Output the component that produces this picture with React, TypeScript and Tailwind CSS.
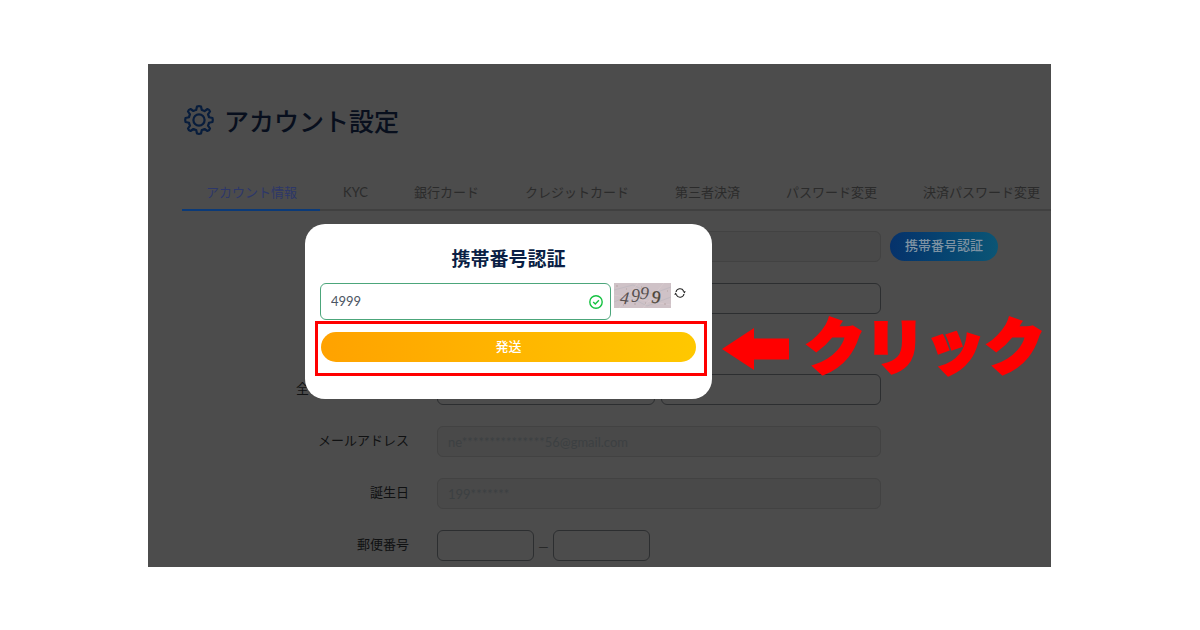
import type { ReactNode } from "react";

const TABS = [
  "アカウント情報",
  "KYC",
  "銀行カード",
  "クレジットカード",
  "第三者決済",
  "パスワード変更",
  "決済パスワード変更",
];

const INPUT = "h-[31px] min-w-0 rounded-md border px-2.5 text-[13px] outline-none";
const ENABLED = "border-[#2c2e30] bg-transparent";
const DISABLED = "border-[#424242] bg-[#494949] text-[#3c4042]";

function GearIcon() {
  return (
    <svg
      viewBox="0 0 32 32"
      className="size-8 shrink-0"
      fill="none"
      stroke="#081d3c"
      strokeWidth="2.2"
      strokeLinejoin="round"
      aria-hidden="true"
    >
      <path d="M14 2.5Q16 1.9 18 2.5L18.8 6Q20.4 6.4 21.6 7.1L24.5 5Q26.500 5.500 27 7.500L25 10.400Q25.700 11.600 26 13.200L29.500 14Q30.100 16 29.500 18L26 18.800Q25.700 20.400 25 21.600L27 24.500Q26.500 26.500 24.500 27L21.600 25Q20.400 25.700 18.800 26L18 29.500Q16 30.100 14 29.500L13.200 26Q11.600 25.700 10.400 25L7.500 27Q5.500 26.500 5 24.500L7 21.600Q6.300 20.400 6 18.800L2.500 18Q1.900 16 2.500 14L6 13.200Q6.300 11.600 7 10.400L5 7.500Q5.500 5.500 7.500 5L10.400 7Q11.600 6.300 13.200 6Z" />
      <circle cx="16" cy="16" r="5.6" />
    </svg>
  );
}

function Captcha() {
  return (
    <svg viewBox="0 0 57 25" className="h-[25px] w-[57px] shrink-0" role="img" aria-label="4999">
      <rect width="57" height="25" fill="#cfc2c7" />
      <g fill="none" strokeWidth="0.6">
        <path d="M0 7 19 2 38 11 57 4M0 19 14 13 33 23 57 14" stroke="#b9b6bd" />
        <path d="M5 25 24 0M29 25 50 0M0 12 28 17 57 22" stroke="#dccdd0" />
        <path d="M2 3h2M12 6h1M20 21h2M31 20h1M50 21h2M53 8h1M9 22h1M27 4h1" stroke="#a4918f" />
      </g>
      <g fill="#57504f" fontFamily="Liberation Serif, serif" fontSize="18">
        <text x="6" y="21" fontStyle="italic" transform="rotate(6 11 15)">4</text>
        <text x="17" y="19" fontStyle="italic">9</text>
        <text x="26" y="16" fontStyle="italic" transform="rotate(4 31 10)">9</text>
        <text x="38" y="20" fill="#4b4538" stroke="#4b4538" strokeWidth="0.3" transform="rotate(10 42 13)">9</text>
      </g>
    </svg>
  );
}

function RefreshIcon() {
  return (
    <svg viewBox="0 0 12 12" className="size-3" aria-hidden="true">
      <path d="M2 5a4.1 4.1 0 0 1 7.6-1.1M10 7a4.1 4.1 0 0 1-7.6 1.1" fill="none" stroke="#222" strokeWidth="1.1" />
      <path d="M8.6 4.2h3.1L10.6 6.6zM3.4 7.8H.3L1.4 5.4z" fill="#222" />
    </svg>
  );
}

function CheckIcon() {
  return (
    <svg viewBox="0 0 14 14" className="size-3.5 shrink-0" fill="none" stroke="#15c241" strokeWidth="1.4" aria-hidden="true">
      <circle cx="7" cy="7" r="6.2" />
      <path d="m4.2 7 2.1 2 3.6-3.7" />
    </svg>
  );
}

function Row({ label, id, children }: { label?: string; id?: string; children: ReactNode }) {
  return (
    <div className="flex items-center gap-7">
      <div className="flex w-[225px] shrink-0 justify-end pb-[3px] text-[13px] leading-5 text-[#101112]">
        {label && <label htmlFor={id}>{label}</label>}
      </div>
      <div className="flex items-center">{children}</div>
    </div>
  );
}

function VerifyDialog() {
  return (
    <div
      role="dialog"
      aria-labelledby="verify-title"
      className="w-[407px] shrink-0 rounded-[20px] bg-white px-[10px] pt-5 pb-[23px]"
    >
      <h2 id="verify-title" className="text-center text-[19px] leading-7 font-bold text-[#0b1f45]">
        携帯番号認証
      </h2>
      <div className="mt-[11px] flex items-start gap-[3px] pl-[5px]">
        <div className="flex h-[37px] w-[291px] items-center rounded-md border border-[#4ca67b] pr-[7px] pl-2.5">
          <input
            aria-label="認証コード"
            defaultValue="4999"
            className="min-w-0 flex-1 font-['Lato','Noto_Sans_CJK_JP',sans-serif] text-[13px] text-[#4b5563] outline-none"
          />
          <CheckIcon />
        </div>
        <Captcha />
        <button type="button" aria-label="更新" className="mt-1">
          <RefreshIcon />
        </button>
      </div>
      {/* Highlighted submit area */}
      <div className="mt-px -mr-[5px] border-3 border-[#f00] pt-2 pr-2 pb-[11px] pl-[3px]">
        <button
          type="button"
          className="block h-[30px] w-full rounded-full bg-linear-to-r from-[#ffa200] to-[#ffc800] pb-0.5 text-[13px] font-medium text-white"
        >
          発送
        </button>
      </div>
    </div>
  );
}

function ClickCallout() {
  return (
    <div className="mt-[89px] ml-2.5 flex shrink-0 items-start gap-4 text-[#f00]">
      <svg viewBox="0 0 67 42" className="mt-[15px] h-[42px] w-[67px] shrink-0" fill="currentColor" aria-hidden="true">
        <path d="M0 21 32 0v10.500h35v21H32V42z" />
      </svg>
      <span className="text-[60px] leading-[60px] font-black whitespace-nowrap [-webkit-text-stroke:3px_#f00]">
        クリック
      </span>
    </div>
  );
}

export default function App() {
  return (
    <main className="bg-white py-16 pr-[149px] pl-[148px] font-['Noto_Sans_CJK_JP',sans-serif]">
      <section className="relative overflow-hidden bg-[#4c4c4c] pb-1.5">
        <h1 className="flex items-center gap-[9px] pt-10 pl-[35px] text-[25px] leading-8 font-medium text-[#080f1d]">
          <GearIcon />
          アカウント設定
        </h1>

        <nav className="mt-[37px] ml-[34px] flex border-b-2 border-[#404040]">
          {TABS.map((tab, i) => (
            <a
              key={tab}
              href="#"
              className={`-mb-0.5 shrink-0 border-b-2 pt-[9px] pb-[7px] font-['Lato','Noto_Sans_CJK_JP',sans-serif] text-[13px] leading-5 ${
                i === 0 ? "border-[#0b3a78] pr-[23px] pl-6 text-[#2d3769]" : "border-transparent px-[23px] text-[#2b2b2b]"
              }`}
            >
              {tab}
            </a>
          ))}
        </nav>

        <form className="mt-5 flex flex-col gap-[21px] pl-9">
          <Row>
            <input disabled aria-label="携帯番号" className={`${INPUT} ${DISABLED} w-[444px]`} />
            <button
              type="button"
              className="ml-[9px] h-[29px] rounded-full bg-linear-to-r from-[#06326b] to-[#0b5575] px-[15px] pb-1 text-[13px] font-medium text-[#7f93a3]"
            >
              携帯番号認証
            </button>
          </Row>
          <Row>
            <input aria-label="ユーザー名" className={`${INPUT} ${ENABLED} w-[444px]`} />
          </Row>
          <div className="mt-[39px] flex items-center gap-7">
            <label htmlFor="full-name" className="ml-28 w-[113px] pb-[3px] text-[13px] leading-5 text-[#101112]">
              全名
            </label>
            <div className="flex gap-1.5">
              <input id="full-name" className={`${INPUT} ${ENABLED} w-[218px]`} />
              <input aria-label="全名（名）" className={`${INPUT} ${ENABLED} w-[220px]`} />
            </div>
          </div>
          <Row label="メールアドレス" id="email">
            <input
              id="email"
              disabled
              defaultValue="ne***************56@gmail.com"
              className={`${INPUT} ${DISABLED} w-[444px] font-['Lato',sans-serif]`}
            />
          </Row>
          <Row label="誕生日" id="birthday">
            <input
              id="birthday"
              disabled
              defaultValue="199*******"
              className={`${INPUT} ${DISABLED} w-[444px] font-['Lato',sans-serif]`}
            />
          </Row>
          <Row label="郵便番号" id="postal">
            <input id="postal" className={`${INPUT} ${ENABLED} w-[97px]`} />
            <span className="w-[19px] text-center text-[11px] leading-5 text-[#202122]">—</span>
            <input aria-label="郵便番号（下4桁）" className={`${INPUT} ${ENABLED} w-[97px]`} />
          </Row>
        </form>

        <div className="absolute inset-0 flex items-start pt-40 pl-[157px]">
          <VerifyDialog />
          <ClickCallout />
        </div>
      </section>
    </main>
  );
}
